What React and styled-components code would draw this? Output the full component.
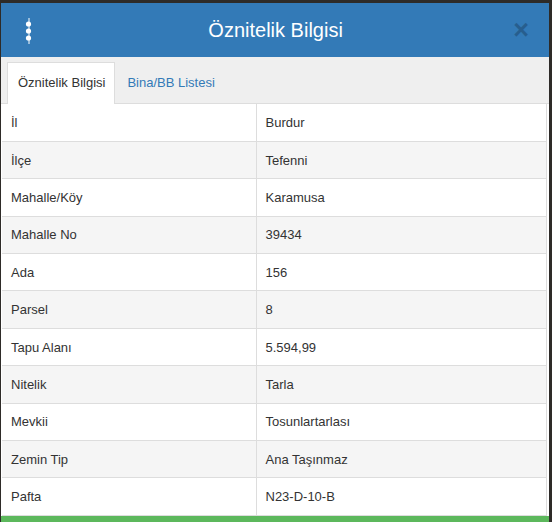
import React from 'react'
import styled, { createGlobalStyle } from 'styled-components'

const GlobalStyle = createGlobalStyle`
  html, body {
    margin: 0;
    padding: 0;
    background: #2e2b28;
    font-family: 'Liberation Sans', Arial, sans-serif;
  }
`

const rows = [
  ['İl', 'Burdur'],
  ['İlçe', 'Tefenni'],
  ['Mahalle/Köy', 'Karamusa'],
  ['Mahalle No', '39434'],
  ['Ada', '156'],
  ['Parsel', '8'],
  ['Tapu Alanı', '5.594,99'],
  ['Nitelik', 'Tarla'],
  ['Mevkii', 'Tosunlartarlası'],
  ['Zemin Tip', 'Ana Taşınmaz'],
  ['Pafta', 'N23-D-10-B'],
]

function App() {
  return (
    <>
      <GlobalStyle />
      <Panel>
        <Header>
          <MenuIcon viewBox="0 0 10 26" width="10" height="26">
            <line x1="5" y1="0" x2="5" y2="26" stroke="#fff" strokeWidth="1" />
            <circle cx="4.5" cy="6" r="2.6" fill="#fff" />
            <circle cx="4.5" cy="13" r="2.6" fill="#fff" />
            <circle cx="4.5" cy="20" r="2.6" fill="#fff" />
          </MenuIcon>
          <Title>Öznitelik Bilgisi</Title>
          <Close>×</Close>
        </Header>
        <Tabs>
          <Tab active>Öznitelik Bilgisi</Tab>
          <Tab>Bina/BB Listesi</Tab>
        </Tabs>
        <Table>
          <colgroup>
            <col style={{ width: 254 }} />
            <col />
          </colgroup>
          <tbody>
            {rows.map((r, i) => (
              <Row key={r[0]} striped={i % 2 === 1}>
                <Cell>{r[0]}</Cell>
                <Cell>{r[1]}</Cell>
              </Row>
            ))}
          </tbody>
        </Table>
        <Footer />
      </Panel>
    </>
  )
}

const Panel = styled.div`
  margin: 3px 0 0 1px;
  width: 548px;
  height: 519px;
  background: #fff;
  display: flex;
  flex-direction: column;
  overflow: hidden;
`

const Header = styled.div`
  height: 54px;
  background: #337ab7;
  display: flex;
  align-items: center;
  padding: 0 20px 0 23px;
  box-sizing: border-box;
  flex-shrink: 0;
`

const MenuIcon = styled.svg`
  display: block;
  margin-top: 1px;
`

const Title = styled.div`
  flex: 1;
  text-align: center;
  color: #fff;
  font-size: 20px;
  padding-left: 4px;
`

const Close = styled.div`
  color: #000;
  opacity: 0.22;
  font-size: 27px;
  font-weight: bold;
  line-height: 1;
  margin-top: 1px;
`

const Tabs = styled.div`
  height: 47px;
  background: #efefef;
  display: flex;
  align-items: flex-end;
  padding: 0 0 0 6px;
  box-sizing: border-box;
  border-bottom: 1px solid #ddd;
  flex-shrink: 0;
`

const Tab = styled.div`
  height: 42px;
  display: flex;
  align-items: center;
  padding: 0 ${p => (p.active ? '9px' : '13px')} 3px ${p => (p.active ? '10px' : '11px')};
  font-size: 13px;
  color: ${p => (p.active ? '#333' : '#337ab7')};
  background: ${p => (p.active ? '#fff' : 'transparent')};
  border: 1px solid ${p => (p.active ? '#ddd' : 'transparent')};
  border-bottom: none;
  margin-bottom: -1px;
  box-sizing: border-box;
`

const Table = styled.table`
  width: 545px;
  margin-left: 1px;
  border-collapse: collapse;
  table-layout: fixed;
  flex-shrink: 0;
`

const Row = styled.tr`
  height: 37.4px;
  background: ${p => (p.striped ? '#f5f5f5' : '#fff')};
`

const Cell = styled.td`
  border: 1px solid #ddd;
  border-top: none;
  padding: 0 9px;
  font-size: 13px;
  color: #333;
  vertical-align: middle;
  &:first-child {
    border-left: none;
  }
`

const Footer = styled.div`
  height: 8px;
  background: #5cb85c;
  flex-shrink: 0;
`

export default App
